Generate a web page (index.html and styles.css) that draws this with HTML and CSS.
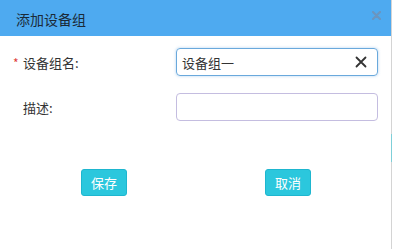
FILE: index.html
```html
<!DOCTYPE html>
<html lang="zh">
<head>
<meta charset="utf-8">
<link rel="stylesheet" href="styles.css">
</head>
<body>
<div class="dialog">
  <div class="header">
    <span class="title">添加设备组</span>
    <svg class="close" width="9" height="9" viewBox="0 0 9 9"><path d="M1 1L8 8M8 1L1 8" stroke="#6b95bf" stroke-width="2.2" stroke-linecap="round"/></svg>
  </div>
  <div class="body">
    <div class="row">
      <label class="label"><span class="req">*</span>设备组名:</label>
      <div class="input focus">
        <span class="value">设备组一</span>
        <svg class="clear" width="12" height="12" viewBox="0 0 12 12"><path d="M1.5 1.5L10.5 10.5M10.5 1.5L1.5 10.5" stroke="#333" stroke-width="1.8" stroke-linecap="round"/></svg>
      </div>
    </div>
    <div class="row row2">
      <label class="label">描述:</label>
      <div class="input plain"></div>
    </div>
    <div class="actions">
      <button class="btn save">保存</button>
      <button class="btn cancel">取消</button>
    </div>
  </div>
  <div class="edge-mark"></div>
</div>
</body>
</html>
```

FILE: styles.css
```css
html, body {
  margin: 0;
  padding: 0;
  background: #fff;
}
body {
  font-family: "Noto Sans CJK SC", "Noto Sans", sans-serif;
  color: #333;
}
.dialog {
  position: relative;
  width: 391px;
  height: 249px;
  border-right: 1px solid #d4d4d4;
  background: #fff;
}
.header {
  height: 36px;
  background: #4eaaf0;
  display: flex;
  align-items: center;
  justify-content: space-between;
  padding: 0 10px 0 16px;
}
.title {
  font-size: 14px;
  color: #1b2a38;
  line-height: 1;
  margin-top: 2px;
}
.close {
  display: block;
  margin-top: -6px;
}
.body {
  padding-top: 12px;
}
.row {
  display: flex;
  align-items: center;
  height: 28px;
}
.row2 {
  margin-top: 17px;
}
.label {
  width: 176px;
  box-sizing: border-box;
  padding-left: 23px;
  position: relative;
  font-size: 13px;
  color: #333;
}
.req {
  position: absolute;
  left: 13px;
  top: 1px;
  color: #e0403a;
  font-size: 12px;
}
.input {
  width: 202px;
  height: 28px;
  box-sizing: border-box;
  border-radius: 4px;
  display: flex;
  align-items: center;
  justify-content: space-between;
  padding: 0 10px 0 5px;
}
.input.focus {
  border: 1px solid #6aa9dc;
  box-shadow: 0 0 3px rgba(80, 150, 220, 0.45);
}
.input.plain {
  border: 1px solid #c4bde0;
}
.value {
  font-size: 13px;
  color: #333;
}
.clear {
  display: block;
}
.actions {
  display: flex;
  margin-top: 48px;
  padding-left: 81px;
  gap: 138px;
}
.btn {
  width: 46px;
  height: 27px;
  border: 1px solid #1eb6cf;
  border-radius: 3px;
  background: #2bc7dd;
  color: #fff;
  font-family: "Noto Sans CJK SC", sans-serif;
  font-size: 13px;
  padding: 0;
  line-height: 1;
}
.edge-mark {
  position: absolute;
  right: -1px;
  top: 134px;
  width: 1px;
  height: 28px;
  background: #7fcfd8;
}
```
